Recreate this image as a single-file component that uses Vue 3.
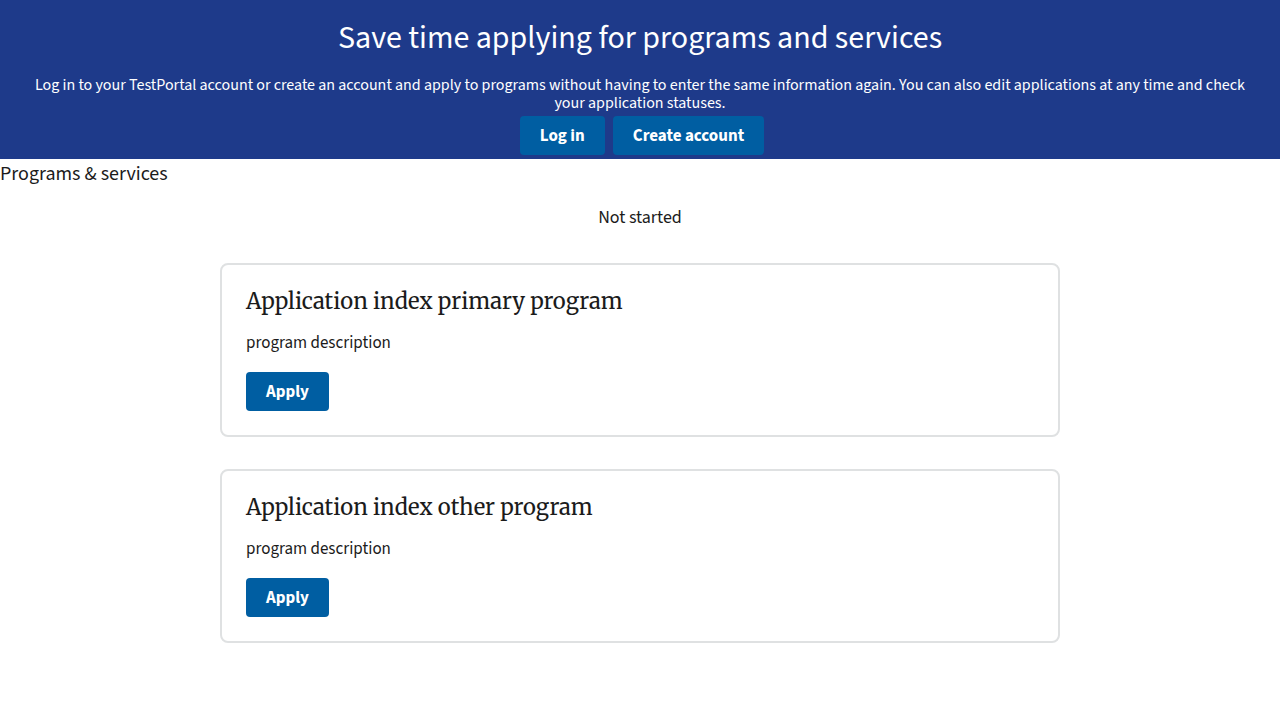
<script setup>
const programs = [
  { id: 'primary', title: 'Application index primary program', description: 'program description' },
  { id: 'other', title: 'Application index other program', description: 'program description' }
]
</script>

<template>
  <main class="page">
    <section class="hero">
      <h1>Save time applying for programs and services</h1>
      <p>Log in to your TestPortal account or create an account and apply to programs without having to enter the same information again. You can also edit applications at any time and check your application statuses.</p>
      <div class="actions">
        <button type="button" class="btn">Log in</button>
        <button type="button" class="btn">Create account</button>
      </div>
    </section>
    <h2 class="section-title">Programs &amp; services</h2>
    <h3 class="group-title">Not started</h3>
    <ul class="cards">
      <li v-for="program in programs" :key="program.id" class="card">
        <h4>{{ program.title }}</h4>
        <p>{{ program.description }}</p>
        <a href="#" class="btn">Apply</a>
      </li>
    </ul>
  </main>
</template>

<style>
body {
  margin: 0;
  background: #fff;
}
</style>

<style scoped>
.page {
  color: #1b1b1b;
  font-family: "Source Sans Pro", "Source Sans 3", "Noto Sans CJK SC", "Open Sans", sans-serif;
  font-size: 16px;
}
h1, h2, h3, h4, p {
  margin: 0;
  font-weight: 400;
}
.hero {
  background: #1e3a8a;
  color: #fff;
  text-align: center;
  padding: 16px 20px 4px;
}
.hero h1 {
  font-size: 32px;
  line-height: 44px;
}
.hero p {
  margin-top: 16px;
  font-size: 16px;
  line-height: 18px;
}
.actions {
  display: flex;
  justify-content: center;
  gap: 8px;
  margin-top: 4px;
  padding-left: 4px;
}
.btn {
  display: inline-block;
  box-sizing: border-box;
  border: 0;
  border-radius: 4px;
  padding: 12px 20px 11px;
  background: #005ea2;
  color: #fff;
  font-family: inherit;
  font-size: 17px;
  font-weight: 700;
  line-height: 16px;
  text-align: center;
  text-decoration: none;
}
.section-title {
  font-size: 20px;
  line-height: 30px;
}
.group-title {
  margin-top: 14px;
  font-size: 18px;
  line-height: 30px;
  text-align: center;
}
.cards {
  display: flex;
  flex-direction: column;
  gap: 32px;
  box-sizing: border-box;
  max-width: 840px;
  margin: 30px auto;
  padding: 0;
  list-style: none;
}
.card {
  border: 2px solid #dfe1e2;
  border-radius: 8px;
  padding: 22px 24px 24px;
}
.card h4 {
  font-family: Merriweather, "Noto Serif", "DejaVu Serif", serif;
  font-size: 22px;
  line-height: 28px;
}
.card p {
  margin: 16px 0;
  font-size: 17px;
  line-height: 25px;
}
.card .btn {
  display: block;
  width: fit-content;
}
</style>
